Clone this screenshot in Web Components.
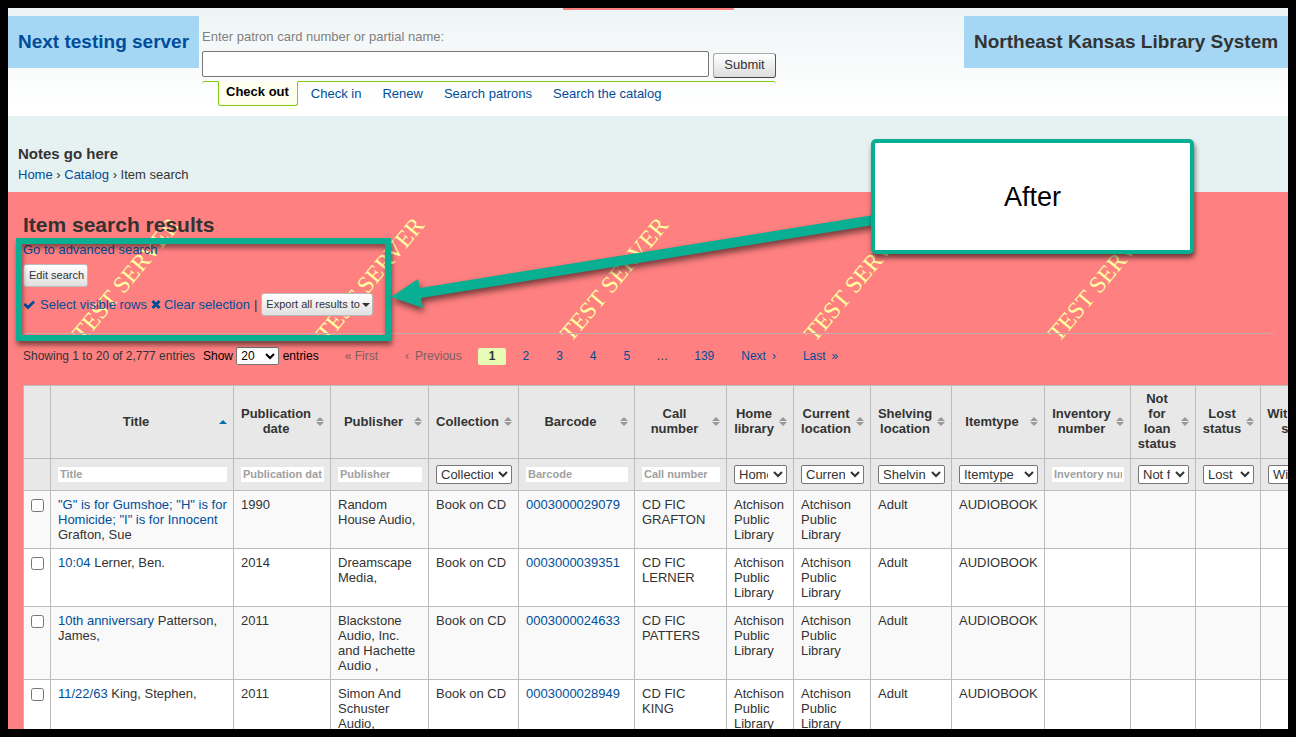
<!DOCTYPE html>
<html lang="en">
<head>
<meta charset="utf-8">
<title>Item search results</title>
<style>
html, body { margin: 0; height: 100%; background: #000; }
body { font: 13px/15px "Liberation Sans", Arial, sans-serif; color: #333; }
</style>
</head>
<body>
<app-frame>
  <staff-header></staff-header>
  <page-trail></page-trail>
  <search-results>
    <results-toolbar></results-toolbar>
    <results-pager></results-pager>
    <results-table></results-table>
  </search-results>
  <note-overlay slot="overlay">After</note-overlay>
</app-frame>
<script>
const define = (name, html, setup) => {
  const template = document.createElement('template');
  template.innerHTML = `<style>*{box-sizing:border-box} a{color:#004d99;text-decoration:none}</style>` + html;
  customElements.define(name, class extends HTMLElement {
    constructor() {
      super();
      const root = this.attachShadow({ mode: 'open' });
      root.append(template.content.cloneNode(true));
      if (setup) setup(root);
    }
  });
};

define('app-frame', `
<style>
:host { display: block; height: 100vh; padding: 8px; box-sizing: border-box; background: #000; }
.view { position: relative; height: 100%; overflow: hidden; display: flex; flex-direction: column; background: #ff8080; }
</style>
<div class="view"><slot></slot><slot name="overlay"></slot></div>`);

define('staff-header', `
<style>
:host { display: flex; position: relative; align-items: flex-start; flex: none; gap: 3px; padding-top: 8px; height: 108px; box-sizing: border-box; background: linear-gradient(#eef4f5, #fff 90%); }
.strip { position: absolute; top: 0; left: 50%; width: 171px; margin-left: -85px; height: 2px; background: #ff8080; }
h1, h2 { margin: 0; padding: 0 10px; font-size: 19px; line-height: 52px; background: #a5d7f4; white-space: nowrap; }
h1 { width: 191px; }
h2 { margin-left: auto; width: 324px; }
form { width: 574px; padding-top: 13px; }
label { display: block; color: #808080; }
.line { display: flex; gap: 4px; height: 27px; margin-top: 7px; }
input { flex: 1; min-width: 0; height: 26px; border: 1px solid #767676; border-radius: 2px; background: #fff; }
button { align-self: flex-end; width: 63px; height: 25px; padding: 0 0 2px; font: inherit; color: #333; background: linear-gradient(#fff, #ddd); border: 1px solid; border-color: #aaa #555 #444 #aaa; border-radius: 3px; }
nav { display: flex; gap: 5px; margin-top: 3px; padding-left: 16px; border-top: 1px solid #85ca11; border-radius: 3px; }
nav a { padding: 4px 8px; }
nav a.on { margin-top: -1px; padding: 2px 8px 6px 7px; border: 1px solid #85ca11; border-top-color: #fffff0; border-radius: 0 0 3px 3px; background: #fffff0; color: #000; font-weight: bold; white-space: nowrap; }
</style>
<div class="strip"></div>
<h1><a href="#home">Next testing server</a></h1>
<form>
  <label for="card">Enter patron card number or partial name:</label>
  <div class="line"><input id="card" type="text"><button type="button">Submit</button></div>
  <nav><a class="on" href="#checkout">Check out</a><a href="#checkin">Check in</a><a href="#renew">Renew</a><a href="#patrons">Search patrons</a><a href="#catalog">Search the catalog</a></nav>
</form>
<h2>Northeast Kansas Library System</h2>`);

define('page-trail', `
<style>
:host { display: block; flex: none; box-sizing: border-box; padding: 29px 10px 10px; background: #e6f1f1; }
strong { display: block; font-size: 15px; line-height: 18px; margin-bottom: 4px; }
</style>
<strong>Notes go here</strong>
<nav><a href="#home">Home</a> › <a href="#catalog">Catalog</a> › Item search</nav>`);

define('search-results', `
<style>
:host { display: block; position: relative; flex: 1 0 0; min-height: 0; overflow: hidden; padding: 20px 14px 0 15px; box-sizing: border-box; background: #ff8080; }
svg { position: absolute; left: 0; top: 0; width: 100%; height: 190px; }
text { font: 24px "Liberation Serif", "Times New Roman", serif; fill: #ffffa0; }
.body { position: relative; }
h1 { margin: 0; font-size: 21px; line-height: 25px; }
</style>
<svg aria-hidden="true"></svg>
<div class="body"><h1>Item search results</h1><slot></slot></div>`, root => {
  root.querySelector('svg').innerHTML = [0, 1, 2, 3, 4]
    .map(i => `<text transform="translate(${75 + 244 * i} 151) rotate(-50)">TEST SERVER</text>`).join('');
});

define('results-toolbar', `
<style>
:host { display: block; padding-bottom: 17px; border-bottom: 1px solid #ccaaaa; }
.top { display: block; margin: 5px 0 7px; }
button { display: block; height: 23px; padding: 0 5px; font: 11px/15px "Liberation Sans", Arial, sans-serif; color: #333; background: linear-gradient(#fff, #e0e0e0); border: 1px solid #bbb; border-radius: 3px; white-space: nowrap; }
.edit { width: 65px; }
.tools { display: flex; align-items: center; gap: 4px; margin-top: 6px; }
.tools a { display: flex; align-items: center; gap: 4px; }
.tools a + a { gap: 3px; }
.export { width: 112px; padding: 0 3px 0 4px; }
.export svg { margin-left: 2px; vertical-align: 1px; }
</style>
<a class="top" href="#advanced">Go to advanced search</a>
<button class="edit" type="button">Edit search</button>
<div class="tools">
  <a href="#select"><svg width="13" height="11" viewBox="0 0 13 11"><path d="M0.500 6l2-2 2.500 2.500 5-5 2 2-7 7z" fill="#004d99"/></svg>Select visible rows</a>
  <a href="#clear"><svg width="10" height="11" viewBox="0 0 10 11"><path d="M1.500 2l7 7M8.500 2l-7 7" stroke="#004d99" stroke-width="3"/></svg>Clear selection</a>
  <span>|</span>
  <button class="export" type="button">Export all results to<svg width="8" height="4"><path d="M0 0h8l-4 4z" fill="#333"/></svg></button>
</div>`);

define('results-pager', `
<style>
:host { display: flex; align-items: center; height: 18px; margin: 13px 0 20px; font-size: 12px; white-space: nowrap; }
.info { width: 180px; padding-top: 1px; }
label { color: #000; }
select { width: 43px; height: 18px; padding: 0; font: inherit; font-size: 12px; border: 1px solid #767676; border-radius: 2px; background: #fff; color: #000; }
nav { display: flex; gap: 5px; margin-left: 15px; }
nav > * { padding: 0 11px; line-height: 17px; border-radius: 2px; }
nav > .gap { padding: 0 10px; }
.off { color: #7d5f5f; }
.now { background: #e6fbb4; font-weight: bold; color: #333; }
i { font-style: normal; }
i.end { margin-left: 6px; }
.sp { margin-right: 6px; }
</style>
<span class="info">Showing 1 to 20 of 2,777 entries</span>
<label>Show <select aria-label="Entries per page"><option>20</option></select> entries</label>
<nav><span class="off"><i>«</i> First</span><span class="off"><i class="sp">‹</i>Previous</span><a class="now" href="#p1">1</a><a href="#p2">2</a><a href="#p3">3</a><a href="#p4">4</a><a href="#p5">5</a><span class="gap">…</span><a href="#p139">139</a><a href="#next">Next<i class="end">›</i></a><a href="#last">Last<i class="end">»</i></a></nav>`);

const columns = [
  ['', 27], ['Title', 183, 'input'], ['Publication date', 97, 'input'], ['Publisher', 98, 'input'],
  ['Collection', 90, 'select'], ['Barcode', 116, 'input'], ['Call number', 92, 'input'],
  ['Home library', 67, 'select'], ['Current location', 77, 'select'], ['Shelving location', 81, 'select'],
  ['Itemtype', 93, 'select'], ['Inventory number', 86, 'input'], ['Not for loan status', 65, 'select'],
  ['Lost status', 65, 'select'], ['Withdrawn status', 92, 'select']
];
const items = [
  ['"G" is for Gumshoe; "H" is for Homicide; "I" is for Innocent', 'Grafton, Sue', '1990', 'Random House Audio,', '0003000029079', 'CD FIC GRAFTON'],
  ['10:04', 'Lerner, Ben.', '2014', 'Dreamscape Media,', '0003000039351', 'CD FIC LERNER'],
  ['10th anniversary', 'Patterson, James,', '2011', 'Blackstone Audio, Inc. and Hachette Audio ,', '0003000024633', 'CD FIC PATTERS'],
  ['11/22/63', 'King, Stephen,', '2011', 'Simon And Schuster Audio,', '0003000028949', 'CD FIC KING']
];
const library = 'Atchison Public Library';

define('results-table', `
<style>
:host { display: block; }
table { table-layout: fixed; width: 1329px; border-collapse: collapse; background: #fff; }
th, td { padding: 6px; border: 1px solid #bcbcbc; text-align: left; vertical-align: top; }
td { padding: 6px 5px 6px 7px; }
td:nth-child(7) { padding-right: 10px; }
td:first-child { padding-left: 6px; }
th { background: #e8e8e8; }
thead tr:first-child th { padding: 5px 6px 7px; vertical-align: middle; }
.head { display: flex; align-items: center; gap: 4px; text-align: center; }
.head span { flex: 1; }
.head svg { flex: none; }
tbody tr:nth-child(odd) { background: #f9f9f9; }
th input { display: block; width: 100%; height: 15px; padding: 0 2px; border: 0; background: #fff; font: bold 11px/15px "Liberation Sans", Arial, sans-serif; }
th input::placeholder { color: #a0a0a0; opacity: 1; }
.filters th { padding: 6px 6px 6px 7px; vertical-align: middle; }
select { display: block; width: 100%; height: 19px; padding: 0 2px 0 0; font: 13px/15px "Liberation Sans", Arial, sans-serif; color: #333; background: #fff; border: 1px solid #767676; border-radius: 2px; }
td input { display: block; width: 13px; height: 13px; margin: 2px 0 0 1px; }
</style>
<table><colgroup></colgroup><thead></thead><tbody></tbody></table>`, root => {
  const sort = on => `<svg width="8" height="9" viewBox="0 0 8 9">${on
    ? '<path d="M0 7h8L4 3z" fill="#0070b0"/>'
    : '<path d="M0 4h8L4 0zM0 5h8L4 9z" fill="#999"/>'}</svg>`;
  root.querySelector('colgroup').innerHTML = columns.map(c => `<col style="width:${c[1]}px">`).join('');
  root.querySelector('thead').innerHTML =
    '<tr>' + columns.map(([t]) => t ? `<th scope="col"><div class="head"><span>${t}</span>${sort(t === 'Title')}</div></th>` : '<th></th>').join('') + '</tr>' +
    '<tr class="filters">' + columns.map(([t, , kind]) => '<th>' + (
      kind === 'input' ? `<input type="text" placeholder="${t}" aria-label="${t}">` :
      kind === 'select' ? `<select aria-label="${t}"><option>${t}</option></select>` : '') + '</th>').join('') + '</tr>';
  root.querySelector('tbody').innerHTML = items.map(([title, author, year, publisher, barcode, call]) =>
    `<tr><td><input type="checkbox" aria-label="Select row"></td><td><a href="#item">${title}</a> ${author}</td><td>${year}</td><td>${publisher}</td>
    <td>Book on CD</td><td><a href="#barcode">${barcode}</a></td><td>${call}</td><td>${library}</td><td>${library}</td>
    <td>Adult</td><td>AUDIOBOOK</td><td></td><td></td><td></td><td></td></tr>`).join('');
});

define('note-overlay', `
<style>
:host { position: absolute; inset: 0; pointer-events: none; color: #000; }
.box { position: absolute; left: 8px; top: 230px; width: 375px; height: 103px; border: 6px solid #08af92; box-shadow: 1px 4px 5px rgba(0,0,0,.5), inset 1px 4px 5px rgba(0,0,0,.45); }
svg { position: absolute; left: 0; top: 0; width: 100%; height: 100%; filter: drop-shadow(1px 4px 3px rgba(0,0,0,.55)); }
.card { position: absolute; left: 863px; top: 131px; width: 323px; height: 115px; display: flex; align-items: center; justify-content: center; border: 4px solid #08af92; border-radius: 5px; background: #fff; font-size: 27px; line-height: 32px; box-shadow: 1px 4px 5px rgba(0,0,0,.55); }
</style>
<div class="box"></div>
<svg aria-hidden="true"><path d="M383 289L410 271L412 280L866 207V217L413 290L415 300Z" fill="#08af92"/></svg>
<div class="card"><slot></slot></div>`);
</script>
</body>
</html>
